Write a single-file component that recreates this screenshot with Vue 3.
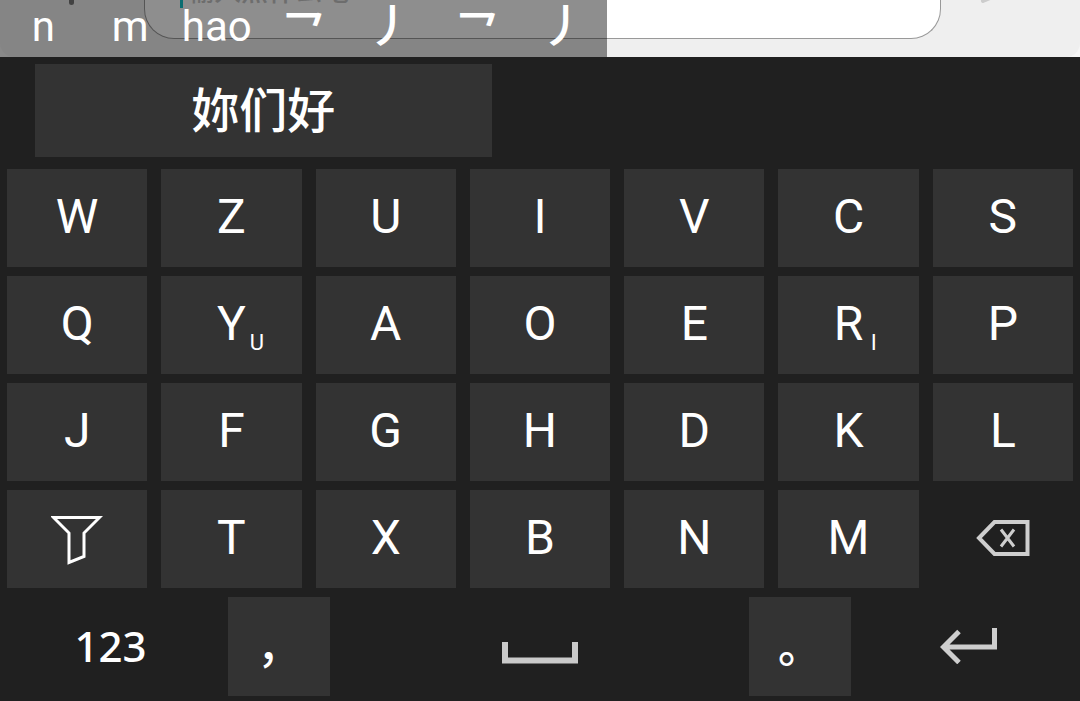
<script setup>
const syllables = ['n', 'm', 'hao']
const strokes = ['㇖', '㇓', '㇖', '㇓']

const rows = [
  [{ k: 'W' }, { k: 'Z' }, { k: 'U' }, { k: 'I' }, { k: 'V' }, { k: 'C' }, { k: 'S' }],
  [{ k: 'Q' }, { k: 'Y', sub: 'U' }, { k: 'A' }, { k: 'O' }, { k: 'E' }, { k: 'R', sub: 'I' }, { k: 'P' }],
  [{ k: 'J' }, { k: 'F' }, { k: 'G' }, { k: 'H' }, { k: 'D' }, { k: 'K' }, { k: 'L' }],
]
const lastRow = ['T', 'X', 'B', 'N', 'M']
</script>

<template>
  <main class="screen">
    <section class="chat">
      <div class="bar">
        <span class="mic"></span>
        <div class="field">
          <span class="caret"></span>
          <input class="message" type="text" placeholder="输入点什么吧" aria-label="Message" />
        </div>
        <svg class="send" viewBox="0 0 20 6" aria-hidden="true"><path d="M3 1 L10 -2" /></svg>
      </div>
      <div class="composing">
        <span v-for="s in syllables" :key="s">{{ s }}</span>
        <span v-for="(s, i) in strokes" :key="i" class="stroke">{{ s }}</span>
      </div>
    </section>

    <section class="keyboard">
      <div class="candidates">
        <button class="key candidate" type="button">妳们好</button>
      </div>
      <div class="keys">
        <template v-for="(row, i) in rows" :key="i">
          <button v-for="c in row" :key="c.k" class="key" type="button">
            <span class="letter">{{ c.k }}</span>
            <span v-if="c.sub" class="sub">{{ c.sub }}</span>
          </button>
        </template>
        <button class="key" type="button" aria-label="Filter">
          <svg class="funnel" width="52" height="50" viewBox="0 0 52 50">
            <path d="M2.500 2.500H48.500L33 18V41.500L18 47.500V18Z" />
          </svg>
        </button>
        <button v-for="k in lastRow" :key="k" class="key" type="button">
          <span class="letter">{{ k }}</span>
        </button>
        <button class="key plain" type="button" aria-label="Backspace">
          <svg class="backspace" width="54" height="38" viewBox="0 0 54 38">
            <path class="thick" d="M3 19L18.500 3H51.500V35H18.500Z" />
            <path class="thin" d="M25 10.500L38 27.500M38 10.500L25 27.500" />
          </svg>
        </button>
      </div>
      <div class="bottom">
        <button class="key plain numbers" type="button">123</button>
        <button class="key punct" type="button">，</button>
        <button class="key plain" type="button" aria-label="Space">
          <svg class="space" width="76" height="22" viewBox="0 0 76 22">
            <path d="M3 0V18.500H73V0" />
          </svg>
        </button>
        <button class="key punct" type="button">。</button>
        <button class="key plain enter" type="button" aria-label="Enter">
          <svg width="58" height="36" viewBox="0 0 58 36">
            <path d="M54.500 0V19H4M19 3.500L3.500 19L19 34.500" />
          </svg>
        </button>
      </div>
    </section>
  </main>
</template>

<style>
body {
  background: #202020;
}
</style>

<style scoped>
.screen {
  min-height: 100vh;
  display: flex;
  flex-direction: column;
  background: #202020;
  font-family: Roboto, "Noto Sans CJK SC", sans-serif;
  color: #fff;
}
.chat {
  position: relative;
  height: 57px;
  background: #f6f6f6;
}
.bar {
  height: 57px;
  box-sizing: border-box;
  padding: 0 139px 18px 144px;
  background: #efefef;
  border-radius: 0 0 14px 14px;
}
.field {
  height: 39px;
  box-sizing: border-box;
  background: #fff;
  border: 1px solid #999;
  border-top: 0;
  border-radius: 0 0 30px 30px;
  position: relative;
}
.caret {
  position: absolute;
  left: 35px;
  top: 0;
  width: 3px;
  height: 8px;
  background: #14c4cc;
}
.message {
  position: absolute;
  left: 42px;
  top: -32px;
  width: 70%;
  height: 44px;
  padding: 0;
  border: 0;
  background: transparent;
  font: 500 27px/44px "Noto Sans CJK SC", sans-serif;
  color: #333;
}
.message::placeholder {
  color: #c4c4c4;
  opacity: 1;
}
.mic {
  position: absolute;
  left: 69px;
  top: 0;
  width: 5px;
  height: 5px;
  border-radius: 0 0 3px 3px;
  background: #777;
}
.send {
  position: absolute;
  right: 80px;
  top: 0;
  width: 20px;
  height: 6px;
  fill: none;
  stroke: #ccc;
  stroke-width: 4;
  stroke-linecap: round;
}
.composing {
  position: absolute;
  left: 0;
  top: 0;
  width: 56.2%;
  height: 57px;
  display: grid;
  grid-template-columns: repeat(7, 1fr);
  background: rgba(0, 0, 0, 0.445);
  font-size: 42px;
  line-height: 54px;
  text-align: center;
}
.stroke {
  font-size: 48px;
  font-weight: 500;
}
.keyboard {
  flex: 1;
  padding: 7px 7px 5px;
}
.key {
  min-width: 0;
  margin: 0;
  padding: 0;
  border: 0;
  border-radius: 0;
  background: #333;
  color: #fff;
  font: 48px/56px Roboto, "Noto Sans CJK SC", sans-serif;
  display: flex;
  align-items: center;
  justify-content: center;
  position: relative;
}
.key.plain {
  background: transparent;
}
.candidates {
  display: flex;
  height: 93px;
  padding-left: 28px;
}
.key.candidate {
  width: 44%;
  font-weight: 500;
  padding-top: 3px;
}
.keys {
  margin-top: 12px;
  display: grid;
  grid-template-columns: repeat(7, 1fr);
  grid-auto-rows: 98px;
  gap: 9px 14px;
}
.letter {
  padding-bottom: 2px;
}
.sub {
  position: absolute;
  left: 63%;
  top: 53px;
  width: 14px;
  font-size: 22px;
  line-height: 28px;
  text-align: center;
}
svg {
  display: block;
  fill: none;
}
.funnel {
  stroke: #fff;
  stroke-width: 3;
  margin-top: 2px;
}
.backspace {
  stroke: #cecece;
  margin-bottom: 2px;
}
.backspace .thick {
  stroke-width: 4;
}
.backspace .thin {
  stroke-width: 3;
}
.space {
  stroke: #cacaca;
  stroke-width: 6;
  margin-top: 12px;
}
.enter svg {
  stroke: #cecece;
  stroke-width: 5;
  margin-bottom: 2px;
}
.bottom {
  margin-top: 9px;
  height: 99px;
  display: grid;
  grid-template-columns: 207fr 102fr 391fr 102fr 208fr;
  gap: 14px;
}
.key.numbers {
  font: 500 42px/56px "Noto Sans", sans-serif;
  padding-bottom: 2px;
}
.key.punct {
  font: 500 44px/56px "Noto Sans CJK SC", sans-serif;
  padding-bottom: 6px;
}
</style>
